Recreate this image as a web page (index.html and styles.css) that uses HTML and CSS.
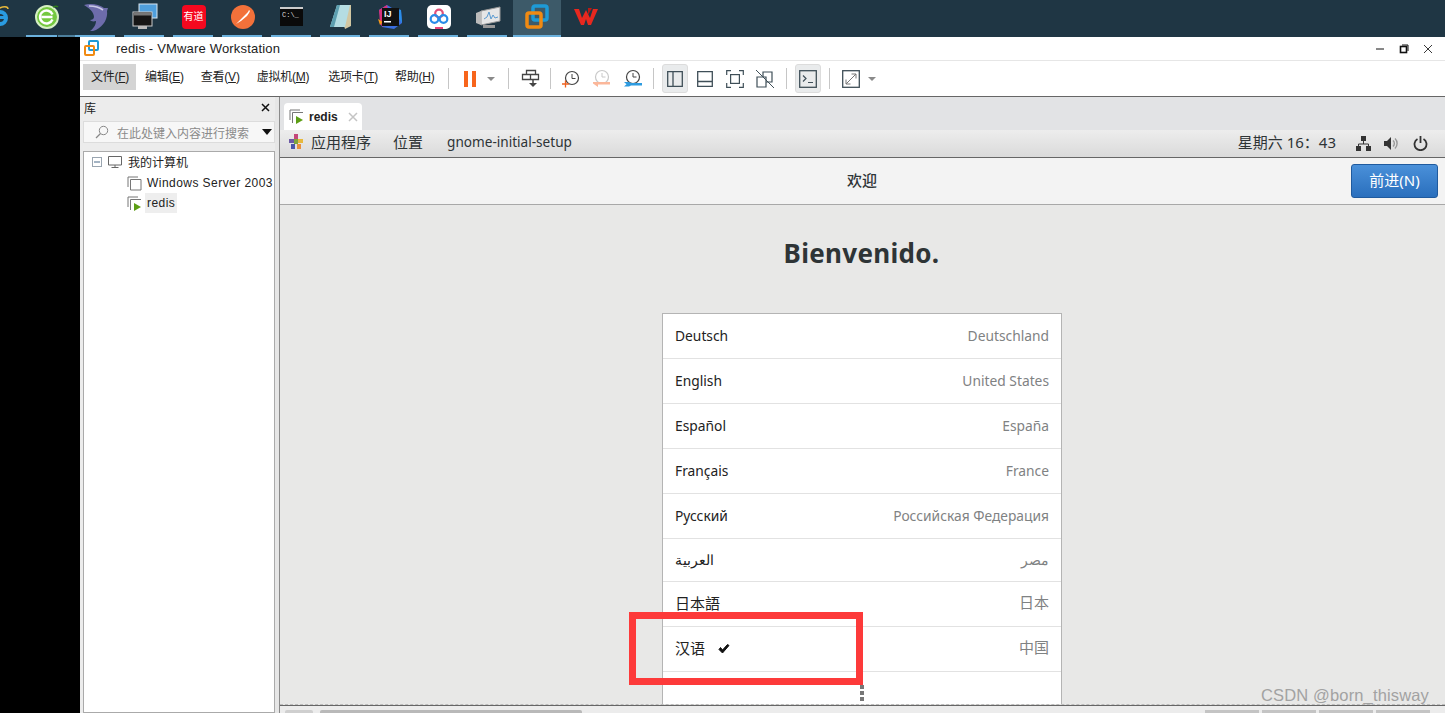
FILE: index.html
```html
<!DOCTYPE html>
<html lang="zh">
<head>
<meta charset="utf-8">
<title>redis - VMware Workstation</title>
<link rel="stylesheet" href="styles.css">
</head>
<body>
<div class="taskbar">
  <div class="tb-item tb-edge"><svg width="10" height="28" viewBox="0 0 10 28"><circle cx="0" cy="15" r="6" fill="none" stroke="#2a9be0" stroke-width="4"/><rect x="-6" y="13" width="12" height="3" fill="#2a9be0"/><path d="M-2 6c5-3 10-3 10 0" fill="none" stroke="#e8b93a" stroke-width="1.500"/></svg></div>
  <div class="tb-item tb-split"><svg width="26" height="26" viewBox="0 0 26 26"><circle cx="13" cy="13" r="11" fill="#74c83f" stroke="#d6f0c4" stroke-width="2"/><path d="M18.500 15.500a6.500 6.500 0 1 1 0-5M7.500 13h11" fill="none" stroke="#fff" stroke-width="2.400"/><path d="M19 3c2-1 4-1 5 0" fill="none" stroke="#2f7d1c" stroke-width="1.500"/></svg></div>
  <div class="tb-item"><svg width="26" height="30" viewBox="0 0 26 30"><path d="M1 3c6-2 15-1 20 3l4 0-1 3c1 7-3 15-11 19-2 1-4 1-6 1 3-2 6-6 6-10-3 1-5 0-6-1 2 0 4-1 4-3C11 10 6 6 1 3z" fill="#6d6cab"/><path d="M6 4c5 0 10 1 14 4" stroke="#c9c8e6" stroke-width="1.600" fill="none"/></svg></div>
  <div class="tb-item"><svg width="26" height="28" viewBox="0 0 26 28"><rect x="7" y="1" width="18" height="14" fill="#4f9fdc" stroke="#d8e6f0"/><path d="M19 15v4h-4" fill="none" stroke="#9aa"/><rect x="1" y="9" width="19" height="14" fill="#161616" stroke="#ccc"/><rect x="1.500" y="9.500" width="18" height="3" fill="#777"/><rect x="6" y="23" width="9" height="3" fill="#bbb"/></svg></div>
  <div class="tb-item"><div class="app-red">有道</div></div>
  <div class="tb-item"><svg width="24" height="24" viewBox="0 0 24 24"><circle cx="12" cy="12" r="12" fill="#f2713a"/><path d="M5 19L17 7l1-2 1 1-1 2-2 3-6 5z" fill="#fff"/></svg></div>
  <div class="tb-item"><div class="app-cmd">C:\_</div></div>
  <div class="tb-item"><svg width="24" height="26" viewBox="0 0 24 26"><path d="M8 1h14l0 21-6 3z" fill="#d2c7a2"/><path d="M8 1h13l-5 22H1z" fill="#b5dde3"/><path d="M8 1h3L5 23H1z" fill="#5d9fb0"/></svg></div>
  <div class="tb-item"><svg width="24" height="26" viewBox="0 0 24 26"><path d="M1 6l8-5 5 3 9 2 1 13-8 6-12-2z" fill="#3a6ee0"/><path d="M1 6l8-5 2 9-6 13-3-3z" fill="#d8307c"/><path d="M14 4l9 2 1 13-6-9z" fill="#2a8fe8"/><path d="M0 15l5 3-3 3z" fill="#f59a1b"/><rect x="4" y="4" width="17" height="18" fill="#111"/><text x="6" y="13" class="ij">IJ</text><rect x="6" y="17" width="7" height="1.500" fill="#fff"/></svg></div>
  <div class="tb-item"><svg width="24" height="24" viewBox="0 0 24 24"><rect width="24" height="24" rx="5" fill="#fff"/><circle cx="12" cy="8.500" r="3.800" fill="none" stroke="#e0507a" stroke-width="2.200"/><circle cx="7.500" cy="14" r="3.800" fill="none" stroke="#2a8be8" stroke-width="2.200"/><circle cx="16.500" cy="14" r="3.800" fill="none" stroke="#2a8be8" stroke-width="2.200"/><rect x="8" y="22" width="8" height="2" fill="#e8447a"/></svg></div>
  <div class="tb-item"><svg width="26" height="24" viewBox="0 0 26 24"><path d="M6 6l19-4v14L6 20z" fill="#e6e6e6" stroke="#999"/><path d="M9 14l3-2 2-5 2 7 2-4 2 3 3-1" fill="none" stroke="#5a9ad0"/><path d="M1 8l5-2v14l-5-2z" fill="#bbb"/><rect x="8" y="20" width="12" height="3" fill="#999"/></svg></div>
  <div class="tb-item tb-active"><svg width="26" height="26" viewBox="0 0 26 26"><rect x="9" y="2" width="14" height="14" rx="2" fill="none" stroke="#1e9ad6" stroke-width="3.500"/><rect x="3" y="9" width="14" height="14" rx="2" fill="none" stroke="#f08a12" stroke-width="3.500"/></svg></div>
  <div class="tb-item tb-plain"><svg width="24" height="18" viewBox="0 0 24 18"><path d="M0 1h5l3 9 4-8 4 8 3-9h5l-7 16h-3l-2-6-2 6H7z" fill="#e8281f"/><path d="M14 0h4l-4 7z" fill="#b81a14"/></svg></div>
</div>
<div class="desktop">
  <div class="black-strip"></div>
  <div class="window">
    <div class="titlebar">
      <svg class="title-logo" width="17" height="17" viewBox="0 0 17 17"><rect x="6" y="1" width="9" height="9" rx="1" fill="none" stroke="#1e9ad6" stroke-width="2"/><rect x="2" y="6" width="9" height="9" rx="1" fill="none" stroke="#f08a12" stroke-width="2"/></svg>
      <span class="title-text">redis - VMware Workstation</span>
      <div class="win-btns">
        <svg width="10" height="10" viewBox="0 0 10 10"><path d="M1 5h8" stroke="#111" stroke-width="1"/></svg>
        <svg width="10" height="10" viewBox="0 0 10 10"><rect x="1.500" y="2.500" width="6" height="6" fill="none" stroke="#111" stroke-width="1.600"/><path d="M3 1h6v6" fill="none" stroke="#111"/></svg>
        <svg width="10" height="10" viewBox="0 0 10 10"><path d="M1 1l8 8M9 1l-8 8" stroke="#222" stroke-width=".9"/></svg>
      </div>
    </div>
    <div class="toolbar">
      <div class="menus">
        <span class="menu menu-on">文件(<u>F</u>)</span><span class="menu">编辑(<u>E</u>)</span><span class="menu">查看(<u>V</u>)</span><span class="menu menu-vm">虚拟机(<u>M</u>)</span><span class="menu">选项卡(<u>T</u>)</span><span class="menu">帮助(<u>H</u>)</span>
      </div>
      <i class="sep sep-first"></i>
      <div class="tool tool-pause"><span class="pause-bar"></span><span class="pause-bar"></span></div>
      <i class="caret caret-a"></i>
      <i class="sep"></i>
      <div class="tool tool-send"><svg width="20" height="22" viewBox="0 0 20 22"><path d="M5.500 2.500h9v4h-9zM1.500 6.500h16v5h-16zM9.500 6.500v5" fill="none" stroke="#444" stroke-width="1.300"/><path d="M12 11v5" stroke="#444" stroke-width="1.500"/><path d="M8 15h8l-4 4z" fill="#444"/></svg></div>
      <i class="sep"></i>
      <div class="tool"><svg width="20" height="20" viewBox="0 0 20 20"><circle cx="11" cy="9" r="6.500" fill="none" stroke="#444" stroke-width="1.200"/><path d="M11 5v4.500h3.500" fill="none" stroke="#444"/><path d="M1 15h7M4.500 11.500v7" stroke="#f0621f" stroke-width="1.300"/></svg></div>
      <div class="tool tool-snap"><svg width="20" height="20" viewBox="0 0 20 20"><circle cx="10" cy="8" r="6.500" fill="none" stroke="#c8c8c8" stroke-width="1.200"/><path d="M10 4v4h3.500" fill="none" stroke="#c8c8c8"/><path d="M1 13h17v2.500H6l0 2.500-5-3.500z" fill="#fbb79a"/></svg></div>
      <div class="tool tool-snap"><svg width="20" height="20" viewBox="0 0 20 20"><circle cx="10" cy="8" r="6.500" fill="none" stroke="#444" stroke-width="1.200"/><path d="M10 4v4h3.500" fill="none" stroke="#444"/><path d="M1 13h5l2 1h11v2.500H8l-2 1H1l2.500-2.200z" fill="#2d9be0"/></svg></div>
      <i class="sep"></i>
      <div class="tool tool-box on"><svg width="16" height="16" viewBox="0 0 16 16"><path d="M.7.7h14.600v14.600H.7zM6 .7v14.600" fill="none" stroke="#3f4f58" stroke-width="1.300"/></svg></div>
      <div class="tool tool-box"><svg width="16" height="16" viewBox="0 0 16 16"><path d="M.7.7h14.600v14.600H.7zM.7 10.500h14.600" fill="none" stroke="#3f4f58" stroke-width="1.300"/></svg></div>
      <div class="tool tool-box"><svg width="18" height="18" viewBox="0 0 18 18"><path d="M.7 5V.7H5M13 .7h4.300V5M17.300 13v4.300H13M5 17.300H.7V13" fill="none" stroke="#3f4f58" stroke-width="1.200"/><rect x="4.600" y="4.600" width="8.800" height="8.800" fill="none" stroke="#3f4f58" stroke-width="1.200"/></svg></div>
      <div class="tool tool-box"><svg width="18" height="18" viewBox="0 0 18 18"><path d="M1 7h9v10H1zM7 7V2h9v10h-6" fill="none" stroke="#3f4f58" stroke-width="1.200"/><path d="M0 0l18 18" stroke="#3f4f58"/></svg></div>
      <i class="sep sep-wide"></i>
      <div class="tool tool-box on"><svg width="18" height="18" viewBox="0 0 18 18"><rect x=".7" y=".7" width="16.600" height="16.600" fill="none" stroke="#3f4f58" stroke-width="1.300"/><path d="M4 5.500l3 3-3 3" fill="none" stroke="#3f4f58" stroke-width="1.200"/><path d="M9 12.500h5" stroke="#3f4f58"/></svg></div>
      <i class="sep sep-wide"></i>
      <div class="tool tool-box"><svg width="18" height="18" viewBox="0 0 18 18"><rect x=".7" y=".7" width="16.600" height="16.600" fill="none" stroke="#3f4f58" stroke-width="1.300"/><path d="M4 14l10-10M9.500 4H14v4.500M4 9.500V14h4.500" fill="none" stroke="#777"/></svg></div>
      <i class="caret caret-b"></i>
    </div>
    <div class="workspace">
      <aside class="library">
        <div class="lib-head"><span>库</span><svg width="9" height="9" viewBox="0 0 9 9"><path d="M1 1l7 7M8 1l-7 7" stroke="#111" stroke-width="1.500"/></svg></div>
        <div class="lib-search">
          <svg width="14" height="14" viewBox="0 0 14 14"><circle cx="8.500" cy="5.500" r="4.200" fill="none" stroke="#888"/><path d="M5.500 8.500L1 13" stroke="#888" stroke-width="1.300"/></svg>
          <span class="lib-search-text">在此处键入内容进行搜索</span>
          <i class="lib-caret"></i>
        </div>
        <div class="tree">
          <div class="tree-row tree-root">
            <span class="tree-minus"></span>
            <svg class="tree-pc" width="16" height="14" viewBox="0 0 16 14"><path d="M1.500 1.500h13v8.500h-13zM4.500 12.500h7M8 10v2.500" fill="none" stroke="#666"/></svg>
            <span>我的计算机</span>
          </div>
          <div class="tree-row tree-vm">
            <svg width="15" height="15" viewBox="0 0 15 15"><path d="M1 11V1h10M3.500 14V3.500H14V14z" fill="none" stroke="#777"/></svg>
            <span>Windows Server 2003</span>
          </div>
          <div class="tree-row tree-vm">
            <svg width="15" height="15" viewBox="0 0 15 15"><path d="M1 11V1h10M3.500 14V3.500H14" fill="none" stroke="#777"/><path d="M7 7l7 4-7 4z" fill="#5c9e14"/></svg>
            <span class="tree-sel">redis</span>
          </div>
        </div>
      </aside>
      <div class="splitter"></div>
      <main class="vm">
        <div class="tabs">
          <div class="tab">
            <svg width="15" height="15" viewBox="0 0 15 15"><path d="M1 11V1h10M3.500 14V3.500H14" fill="none" stroke="#777"/><path d="M7 7l7 4-7 4z" fill="#5c9e14"/></svg>
            <b>redis</b>
            <svg width="10" height="10" viewBox="0 0 10 10"><path d="M1 1l8 8M9 1l-8 8" stroke="#c4c4c4" stroke-width="1.500"/></svg>
          </div>
        </div>
        <div class="gnome-bar">
          <svg class="foot" width="16" height="16" viewBox="0 0 16 16"><rect x="6" y="0" width="4" height="5" fill="#c4477a"/><rect x="1" y="5" width="5" height="4" fill="#6d5aa6"/><rect x="10" y="5" width="5" height="4" fill="#e7b93d"/><rect x="3" y="10" width="4" height="5" fill="#4a56a8"/><rect x="9" y="10" width="4" height="5" fill="#e7913d"/><rect x="6" y="5" width="4" height="5" fill="#7da63c"/></svg>
          <span class="g-cjk g-apps">应用程序</span>
          <span class="g-cjk g-places">位置</span>
          <span class="g-latin">gnome-initial-setup</span>
          <span class="g-cjk g-clock">星期六 16：43</span>
          <svg class="g-net" width="15" height="15" viewBox="0 0 15 15"><path d="M5 0h5v5H5zM0 10h5v5H0zM10 10h5v5h-5z" fill="#333"/><path d="M7.500 5v3M2.500 10V8h10v2" fill="none" stroke="#333"/></svg>
          <svg class="g-vol" width="15" height="15" viewBox="0 0 15 15"><path d="M0 5h3l4-4v13l-4-4H0z" fill="#333"/><path d="M9 4.500a4 4 0 0 1 0 6M11 2.500a7 7 0 0 1 0 10" fill="none" stroke="#999" stroke-width="1.400"/></svg>
          <svg class="g-pow" width="15" height="15" viewBox="0 0 15 15"><path d="M4.500 3a6 6 0 1 0 6 0" fill="none" stroke="#333" stroke-width="1.800"/><path d="M7.500 0v7" stroke="#333" stroke-width="1.800"/></svg>
        </div>
        <div class="g-head">
          <span class="g-title">欢迎</span>
          <button class="g-next">前进(N)</button>
        </div>
        <div class="g-body">
          <h1>Bienvenido.</h1>
          <div class="lang-list">
            <div class="lang"><span>Deutsch</span><span class="country">Deutschland</span></div>
            <div class="lang"><span>English</span><span class="country">United States</span></div>
            <div class="lang"><span>Español</span><span class="country">España</span></div>
            <div class="lang"><span>Français</span><span class="country">France</span></div>
            <div class="lang"><span>Русский</span><span class="country">Российская Федерация</span></div>
            <div class="lang lang-short"><span>العربية</span><span class="country">مصر</span></div>
            <div class="lang lang-cjk"><span>日本語</span><span class="country">日本</span></div>
            <div class="lang lang-cjk"><span class="zh">汉语<svg class="check" width="12" height="10" viewBox="0 0 12 10"><path d="M1 5.500l3.500 3.500L11 1.500 9.500.5 4.500 6 2.500 3.500z" fill="#111" stroke="#111"/></svg></span><span class="country">中国</span></div>
            <div class="lang lang-empty"></div>
          </div>
          <div class="dots"><i></i><i></i><i></i></div>
        </div>
        <div class="status">
          <i class="thumb thumb-a"></i><i class="thumb thumb-b"></i>
          <div class="status-tabs"><i></i><i></i><i></i><i></i></div>
        </div>
      </main>
    </div>
  </div>
</div>
<div class="redbox"></div>
<div class="watermark">CSDN @born_thisway</div>
</body>
</html>
```
FILE: styles.css
```css
* { box-sizing: border-box; }
html, body { margin: 0; height: 100%; overflow: hidden; }
body {
  position: relative;
  width: 1445px;
  height: 713px;
  font-family: "Liberation Sans", "Noto Sans CJK SC", sans-serif;
  background: #000;
  display: flex;
  flex-direction: column;
}

/* taskbar */
.taskbar {
  height: 37px;
  flex: none;
  background: #1f3644;
  display: flex;
  padding-left: 22px;
  overflow: hidden;
}
.taskbar svg { flex: none; }
.tb-item {
  width: 49px;
  height: 37px;
  flex: none;
  display: flex;
  align-items: center;
  justify-content: center;
  padding-bottom: 4px;
  position: relative;
}
.tb-item::after {
  content: "";
  position: absolute;
  left: 4px;
  width: 40px;
  bottom: 0;
  height: 2px;
  background: #6bb1dd;
}
.tb-edge { width: 0; margin-left: -22px; margin-right: 22px; justify-content: flex-start; }
.tb-edge::after { display: none; }
.tb-split::after { width: 31px; box-shadow: 32px 0 0 0 #4d7f9c; }
.tb-active { width: 48px; margin-left: 1px; background: #3d5a69; }
.tb-active::after { left: 0; width: 100%; }
.tb-plain::after { display: none; }
.app-red {
  width: 24px;
  height: 24px;
  border-radius: 4px;
  background: #f5081f;
  color: #fff;
  font-size: 10px;
  line-height: 24px;
  text-align: center;
  white-space: nowrap;
}
.app-cmd {
  width: 23px;
  height: 19px;
  background: #0a0a0a;
  border-top: 2px solid #ccc;
  color: #ddd;
  font: 7px/12px "Liberation Mono", monospace;
  padding-left: 2px;
}
.ij { font: 700 9px "Liberation Sans", sans-serif; fill: #fff; }

/* window */
.desktop { flex: 1; display: flex; min-height: 0; }
.black-strip { width: 80px; flex: none; background: #000; }
.window { flex: 1; min-width: 0; display: flex; flex-direction: column; background: #fff; }
.titlebar {
  height: 23px;
  flex: none;
  display: flex;
  align-items: center;
  padding-left: 3px;
  font-size: 13px;
  color: #222;
}
.title-logo { margin-right: 16px; }
.title-text { letter-spacing: .18px; }
.win-btns { margin-left: auto; display: flex; gap: 14px; padding-right: 12px; }
.toolbar {
  height: 37px;
  flex: none;
  display: flex;
  align-items: center;
  border-top: 1px solid #e6e6e6;
  border-bottom: 1px solid #666;
  padding-left: 3px;
}
.menus { display: flex; align-items: center; gap: 1px; width: 365px; flex: none; margin-bottom: 4px; }
.menu {
  font-size: 12px;
  color: #222;
  height: 26px;
  line-height: 26px;
  padding: 0 8px;
  white-space: nowrap;
  letter-spacing: -.25px;
}
.menu u { text-underline-offset: 1px; }
.menu-on { background: #d4d4d4; padding-right: 7px; }
.menu-vm { padding-right: 10px; }
.sep { width: 1px; height: 21px; background: #c6c6c6; flex: none; margin: 0 12px 0 13px; }
.sep-first { margin-left: 0; margin-right: 15px; }
.sep-wide { margin: 0 8px 0 4px; }
.tool { width: 30px; height: 29px; flex: none; display: flex; align-items: center; justify-content: center; }
.tool-pause { width: 12px; gap: 4px; }
.pause-bar { width: 4px; height: 16px; background: #f7651c; }
.tool-send { width: 20px; }
.tool-send + .sep { margin-left: 9px; margin-right: 5px; }
.tool-snap { width: 31px; }
.tool-snap + .sep { margin: 0 8px 0 5px; }
.tool-box { width: 26px; margin-right: 4px; border-radius: 3px; }
.tool-box.on { background: #e9ebec; border: 1px solid #dcdcdc; }
.caret {
  width: 0; height: 0; flex: none;
  border-left: 4px solid transparent;
  border-right: 4px solid transparent;
  border-top: 4px solid #8a8a8a;
}
.caret-a { margin-left: 11px; }
.caret-b { margin-left: 0; }

.workspace { flex: 1; min-height: 0; display: flex; }
.library {
  width: 195px;
  flex: none;
  background: #ececec;
  padding: 0 0 0 3px;
  display: flex;
  flex-direction: column;
}
.lib-head {
  height: 24px;
  flex: none;
  display: flex;
  align-items: center;
  justify-content: space-between;
  padding: 0 5px 3px 1px;
  font-size: 12px;
  color: #222;
}
.lib-search {
  height: 22px;
  flex: none;
  background: #f7f7f7;
  border: 1px solid #dcdcdc;
  display: flex;
  align-items: center;
  padding: 0 2px 0 11px;
  font-size: 12px;
  color: #8a8a8a;
}
.lib-search-text { margin-left: 8px; white-space: nowrap; }
.lib-caret {
  margin-left: auto;
  width: 0; height: 0;
  border-left: 5px solid transparent;
  border-right: 5px solid transparent;
  border-top: 6px solid #111;
}
.tree {
  flex: 1;
  margin-top: 8px;
  background: #fff;
  border: 1px solid #aaa;
  font-size: 12px;
  color: #222;
  overflow: hidden;
}
.tree-row { height: 20px; display: flex; align-items: center; white-space: nowrap; padding-left: 8px; }
.tree-root { height: 21px; padding-bottom: 2px; }
.tree-minus {
  width: 10px; height: 10px;
  border: 1px solid #9aa5b0;
  position: relative;
  margin-right: 5px;
}
.tree-minus::after {
  content: "";
  position: absolute;
  left: 1px; right: 1px; top: 3px;
  height: 2px;
  background: #4a6a8a;
  transform: scaleY(.5);
}
.tree-pc { margin-right: 5px; }
.tree-vm { padding-left: 43px; gap: 5px; letter-spacing: .45px; }
.tree-sel { background: #eeeeee; padding: 3px 2px; margin-left: -2px; }
.splitter { width: 4px; flex: none; background: #e6e6e6; }
.vm {
  flex: 1;
  min-width: 0;
  display: flex;
  flex-direction: column;
  border-left: 1px solid #8a8a8a;
}
.tabs {
  height: 33px;
  flex: none;
  background: #e2e3e5;
  padding: 6px 0 0 4px;
  display: flex;
}
.tab {
  width: 78px;
  height: 27px;
  background: #fff;
  border-radius: 4px 4px 0 0;
  display: flex;
  align-items: center;
  padding-left: 5px;
  font-size: 12px;
  color: #222;
  gap: 5px;
}
.tab svg:last-child { margin-left: 5px; }
.gnome-bar {
  height: 28px;
  flex: none;
  border-bottom: 1px solid #666;
  background: linear-gradient(#ededed, #dadada);
  display: flex;
  align-items: center;
  padding: 0 0 4px 8px;
  font-family: "Noto Sans", "Noto Sans CJK SC", sans-serif;
  color: #2e3436;
}
.g-cjk { font-size: 15px; }
.g-latin { font-size: 13.600px; }
.foot { margin-right: 7px; }
.g-apps { margin-right: 22px; }
.g-places { margin-right: 24px; }
.g-clock { margin-left: auto; margin-right: 20px; }
.gnome-bar svg:not(.foot) { position: relative; top: 2px; }
.g-net { margin-right: 13px; }
.g-vol { margin-right: 14px; }
.g-pow { margin-right: 17px; }
.g-head {
  height: 47px;
  flex: none;
  position: relative;
  background: #f3f3f3;
  border-bottom: 1px solid #a8a8a8;
  display: flex;
  align-items: center;
  justify-content: center;
  padding-bottom: 3px;
  font-family: "Noto Sans", "Noto Sans CJK SC", sans-serif;
  font-size: 15px;
  color: #2e3436;
}
.g-title { font-weight: 500; margin-right: 1px; }
.g-next {
  position: absolute;
  right: 7px;
  top: 6px;
  width: 87px;
  height: 34px;
  border: 1px solid #1f5a9e;
  border-radius: 3px;
  background: linear-gradient(#4a90d9, #2a6fbd);
  color: #fff;
  font: 15px "Noto Sans", "Noto Sans CJK SC", sans-serif;
  padding: 0 0 3px;
}
.g-body {
  flex: 1;
  min-height: 0;
  overflow: hidden;
  position: relative;
  background: #e8e8e7;
  border-bottom: 1px dashed #bcbcbc;
  font-family: "Noto Sans", "Noto Sans CJK SC", sans-serif;
}
h1 {
  margin: 30px 0 0;
  padding-right: 2px;
  height: 78px;
  text-align: center;
  font-size: 26px;
  line-height: 37px;
  font-weight: 700;
  color: #2e3436;
  letter-spacing: .3px;
}
.lang-list {
  width: 400px;
  margin: 0 0 0 382px;
  background: #fff;
  border: 1px solid #b4b4b4;
  border-bottom: 0;
}
.lang {
  height: 45px;
  border-bottom: 1px solid #e2e2e2;
  display: flex;
  align-items: center;
  justify-content: space-between;
  padding: 0 12px 2px;
  font-size: 13.800px;
  color: #222;
}
.lang-short { height: 43px; }
.lang-empty { border-bottom: 0; }
.lang-cjk { font-size: 15px; }
.lang-cjk span { position: relative; top: -1px; }
.lang-cjk .country { top: -2px; }
.country { color: #7f8283; }
.zh { display: flex; align-items: center; }
.check { margin-left: 13px; position: relative; top: 2px; }
.dots {
  position: absolute;
  left: 580px;
  top: 480px;
  display: flex;
  flex-direction: column;
  gap: 2px;
}
.dots i { display: block; width: 4px; height: 4px; background: #777; }
.status {
  height: 8px;
  flex: none;
  background: #ececec;
  border-top: 1px solid #666;
  position: relative;
  padding: 4px 0 0 5px;
  display: flex;
  align-items: flex-start;
  overflow: hidden;
}
.thumb { display: block; height: 6px; background: #b9b9b9; border-radius: 2px 2px 0 0; flex: none; }
.thumb-a { width: 28px; background: #cfcfcf; margin-right: 7px; }
.thumb-b { width: 262px; }
.status-tabs { margin-left: auto; margin-right: 15px; display: flex; gap: 3px; }
.status-tabs i { display: block; width: 54px; height: 6px; background: #c4c4c4; }

/* annotations lying over the screenshot */
.redbox {
  position: absolute;
  left: 629px;
  top: 612px;
  width: 234px;
  height: 73px;
  border: 7px solid #fd3a3a;
}
.watermark {
  position: absolute;
  left: 1261px;
  top: 685px;
  font-size: 16.500px;
  line-height: 20px;
  color: #a2a2a2;
  letter-spacing: .15px;
  white-space: nowrap;
}
```
